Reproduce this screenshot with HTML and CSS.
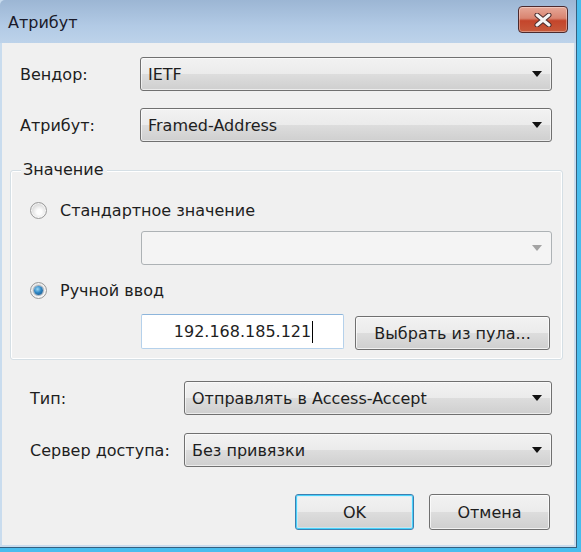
FILE: index.html
```html
<!DOCTYPE html>
<html lang="ru">
<head>
    <meta charset="UTF-8">
    <meta name="viewport" content="width=device-width, initial-scale=1.0">
    <title>Атрибут</title>
    <link rel="stylesheet" href="styles.css">
</head>
<body>
<div class="window">
  <div class="frame">
    <div class="titlebar">
        <span class="title">Атрибут</span>
        <button class="close-btn" aria-label="Закрыть">
            <svg width="20" height="14" viewBox="0 0 20 14">
                <path d="M4 2 L16 12 M16 2 L4 12" stroke="#4a2b2b" stroke-width="5" stroke-linecap="round"/>
                <path d="M4 2 L16 12 M16 2 L4 12" stroke="#f4f4f4" stroke-width="3" stroke-linecap="round"/>
            </svg>
        </button>
    </div>

    <div class="client">
        <div class="top-rows">
            <label class="lbl">Вендор:</label>
            <div class="combo"><span>IETF</span><span class="arrow"></span></div>

            <label class="lbl">Атрибут:</label>
            <div class="combo"><span>Framed-Address</span><span class="arrow"></span></div>
        </div>

        <div class="group">
            <span class="group-title">Значение</span>

            <label class="radio-row">
                <input type="radio" name="value" class="radio">
                <span>Стандартное значение</span>
            </label>

            <div class="combo combo-disabled indent"><span></span><span class="arrow"></span></div>

            <label class="radio-row radio-row-2">
                <input type="radio" name="value" class="radio" checked>
                <span>Ручной ввод</span>
            </label>

            <div class="manual indent">
                <div class="ip-field">192.168.185.121<span class="caret"></span></div>
                <button class="btn btn-pool">Выбрать из пула...</button>
            </div>
        </div>

        <div class="bottom-rows">
            <label class="lbl">Тип:</label>
            <div class="combo"><span>Отправлять в Access-Accept</span><span class="arrow"></span></div>

            <label class="lbl">Сервер доступа:</label>
            <div class="combo"><span>Без привязки</span><span class="arrow"></span></div>
        </div>

        <div class="actions">
            <button class="btn btn-ok">OK</button>
            <button class="btn btn-cancel">Отмена</button>
        </div>
    </div>
  </div>
</div>
</body>
</html>
```

FILE: styles.css
```css
body {
    margin: 0;
    font-family: "DejaVu Sans", "Liberation Sans", sans-serif;
    font-size: 16px;
    color: #1e1e1e;
    background: #fff;
}

.window {
    width: 581px;
    height: 552px;
    box-sizing: border-box;
    border-right: 4px solid #48bdee;
    border-bottom: 4px solid #48bdee;
}

.frame {
    height: 100%;
    box-sizing: border-box;
    border-right: 1px solid #35607f;
    border-bottom: 1px solid #35607f;
    background: #c9dcee;
    padding: 0 2px 2px 2px;
    display: flex;
    flex-direction: column;
}

.titlebar {
    height: 43px;
    margin: 0 -2px;
    flex-shrink: 0;
    display: flex;
    align-items: flex-start;
    justify-content: space-between;
    background: linear-gradient(#9cb6d4, #b2cae5 60%, #bdd3ea);
    border-top-left-radius: 5px;
}

.title {
    margin: 13px 0 0 8px;
    font-size: 16px;
    color: #1a1a2a;
}

.close-btn {
    width: 50px;
    height: 27px;
    margin: 6px 8px 0 0;
    padding: 0;
    border: 1px solid #4b2a2e;
    border-radius: 4px;
    background: linear-gradient(#e6a898, #d98470 45%, #c4452b 55%, #c75a3c);
    box-shadow: inset 0 0 0 1px rgba(255, 255, 255, 0.35);
    display: flex;
    align-items: center;
    justify-content: center;
}

.client {
    flex: 1;
    background: #f0f0f0;
    display: flex;
    flex-direction: column;
}

.top-rows {
    display: grid;
    grid-template-columns: 120px 1fr;
    row-gap: 17px;
    align-items: center;
    margin-top: 14px;
    padding: 0 22px 0 18px;
}

.bottom-rows {
    display: grid;
    grid-template-columns: 154px 1fr;
    row-gap: 18px;
    align-items: center;
    margin-top: 21px;
    padding: 0 22px 0 28px;
}

.lbl {
    white-space: nowrap;
}

.combo {
    height: 34px;
    box-sizing: border-box;
    border: 1px solid #707070;
    border-radius: 3px;
    background: linear-gradient(#f2f2f2, #ebebeb 50%, #dddddd 50%, #cfcfcf);
    box-shadow: inset 0 0 0 1px rgba(255, 255, 255, 0.6);
    display: flex;
    align-items: center;
    justify-content: space-between;
    padding: 0 9px 0 7px;
}

.arrow {
    width: 0;
    height: 0;
    border-left: 5px solid transparent;
    border-right: 5px solid transparent;
    border-top: 6px solid #111;
}

.combo-disabled {
    border-color: #adb2b5;
    background: #f4f4f4;
    box-shadow: none;
}

.combo-disabled .arrow {
    border-top-color: #a3a3a3;
}

.group {
    position: relative;
    margin: 28px 11px 0 8px;
    height: 190px;
    box-sizing: border-box;
    border: 1px solid #d5dfe5;
    border-radius: 3px;
    box-shadow: inset 0 0 0 1px #fff;
    padding: 0 10px 0 19px;
    display: flex;
    flex-direction: column;
}

.group-title {
    position: absolute;
    top: -11px;
    left: 10px;
    padding: 0 3px 0 2px;
    background: #f0f0f0;
}

.radio-row {
    display: flex;
    align-items: center;
    gap: 13px;
    height: 20px;
    margin-top: 29px;
}

.radio-row-2 {
    margin-top: 15px;
}

.radio {
    appearance: none;
    -webkit-appearance: none;
    margin: 0;
    width: 17px;
    height: 17px;
    border-radius: 50%;
    border: 1px solid #9a9a9a;
    background: radial-gradient(circle at 55% 60%, #fdfdfd 20%, #e2e2e2 55%, #bdbdbd);
    box-shadow: inset 0 0 0 1px rgba(255, 255, 255, 0.7);
    position: relative;
}

.radio:checked::after {
    content: "";
    position: absolute;
    left: 3px;
    top: 3px;
    width: 9px;
    height: 9px;
    border-radius: 50%;
    background: radial-gradient(circle at 40% 35%, #9ad8f6, #2e86c4 45%, #184a78);
    box-shadow: 0 0 0 1px rgba(40, 70, 100, 0.35);
}

.indent {
    margin-left: 111px;
}

.combo-disabled.indent {
    margin-top: 11px;
}

.manual {
    display: flex;
    gap: 11px;
    margin-top: 14px;
}

.ip-field {
    width: 203px;
    height: 35px;
    box-sizing: border-box;
    border: 1px solid #b5d1eb;
    border-top-color: #8db5db;
    border-radius: 2px;
    background: #fff;
    display: flex;
    align-items: center;
    justify-content: center;
    padding-left: 2px;
    font-size: 16px;
}

.caret {
    display: inline-block;
    width: 1px;
    height: 22px;
    margin-left: 1px;
    background: #000;
}

.btn {
    font-family: inherit;
    font-size: 16px;
    color: #1e1e1e;
    height: 34px;
    box-sizing: border-box;
    border: 1px solid #707070;
    border-radius: 3px;
    background: linear-gradient(#f2f2f2, #ebebeb 50%, #dddddd 50%, #cfcfcf);
    box-shadow: inset 0 0 0 1px rgba(255, 255, 255, 0.7);
    padding: 0;
}

.btn-pool {
    width: 195px;
    margin-top: 2px;
}

.actions {
    display: flex;
    justify-content: flex-end;
    gap: 15px;
    margin-top: 27px;
    padding-right: 24px;
}

.btn-ok,
.btn-cancel {
    height: 36px;
}

.btn-ok {
    width: 119px;
    border-color: #3c7fb1;
    box-shadow: inset 0 0 0 1px #48d2fb, inset 0 0 0 2px rgba(200, 240, 255, 0.6);
}

.btn-cancel {
    width: 121px;
}
```
